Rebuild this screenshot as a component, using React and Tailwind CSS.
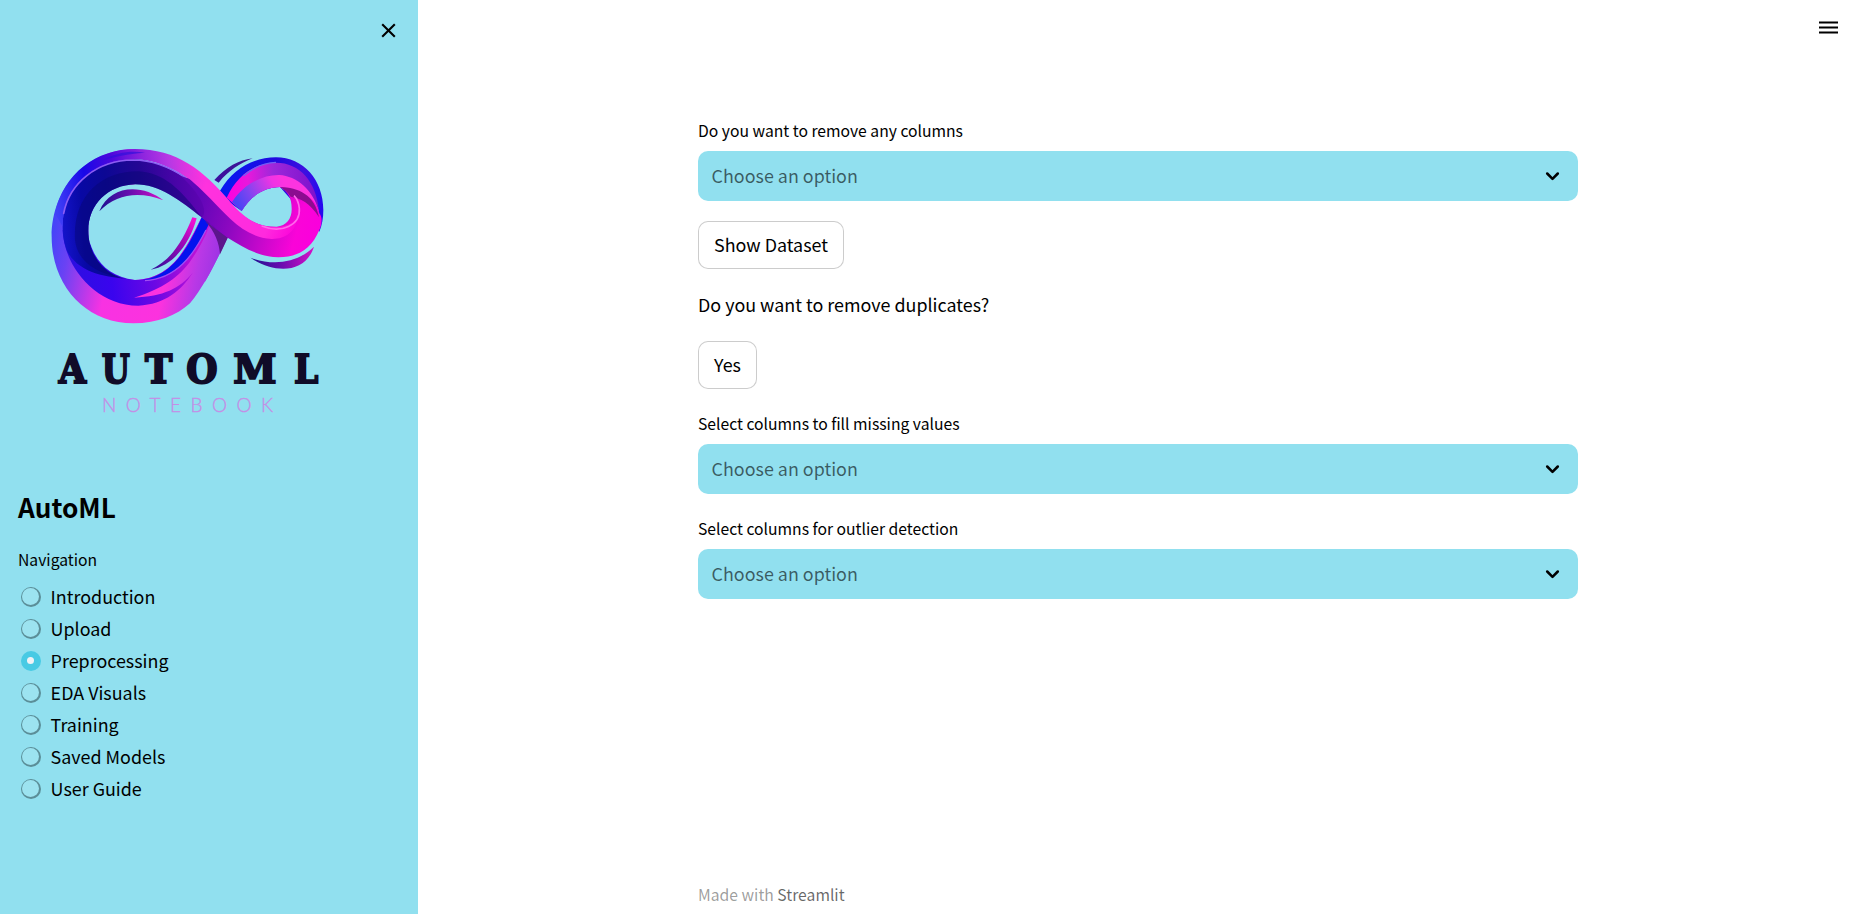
const NAV = ['Introduction', 'Upload', 'Preprocessing', 'EDA Visuals', 'Training', 'Saved Models', 'User Guide'];

function Logo() {
  return (
    <svg viewBox="0 0 930 900" className="block h-[300px] w-[310px]" role="img" aria-label="AutoML Notebook">
      <defs>
        <linearGradient id="outer" gradientUnits="userSpaceOnUse" x1="65" y1="300" x2="560" y2="400">
          <stop offset="0" stopColor="#4444f8" />
          <stop offset="0.12" stopColor="#6a42f4" />
          <stop offset="0.38" stopColor="#f832e2" />
          <stop offset="0.72" stopColor="#fc32de" />
          <stop offset="0.9" stopColor="#b838e6" />
          <stop offset="1" stopColor="#a034e4" />
        </linearGradient>
        <linearGradient id="inner" gradientUnits="userSpaceOnUse" x1="95" y1="300" x2="570" y2="260">
          <stop offset="0" stopColor="#1414cc" />
          <stop offset="0.14" stopColor="#0808a4" />
          <stop offset="0.3" stopColor="#0c0894" />
          <stop offset="0.52" stopColor="#240694" />
          <stop offset="0.75" stopColor="#4a04a8" />
          <stop offset="1" stopColor="#6c04b8" />
        </linearGradient>
        <linearGradient id="topRim" gradientUnits="userSpaceOnUse" x1="80" y1="230" x2="520" y2="150">
          <stop offset="0" stopColor="#4040f6" />
          <stop offset="0.22" stopColor="#1808e8" />
          <stop offset="0.42" stopColor="#4c08dc" />
          <stop offset="0.62" stopColor="#8c24de" />
          <stop offset="0.8" stopColor="#b838e4" />
          <stop offset="1" stopColor="#fc32de" />
        </linearGradient>
        <linearGradient id="front" gradientUnits="userSpaceOnUse" x1="500" y1="230" x2="850" y2="330">
          <stop offset="0" stopColor="#6006b8" />
          <stop offset="0.3" stopColor="#8c08c0" />
          <stop offset="0.6" stopColor="#c808cc" />
          <stop offset="0.85" stopColor="#fa04d8" />
          <stop offset="1" stopColor="#fa00dc" />
        </linearGradient>
        <linearGradient id="stripe" gradientUnits="userSpaceOnUse" x1="440" y1="120" x2="805" y2="280">
          <stop offset="0" stopColor="#d034e0" />
          <stop offset="0.25" stopColor="#ff32de" />
          <stop offset="0.8" stopColor="#ff2ade" />
          <stop offset="1" stopColor="#fc04da" />
        </linearGradient>
        <linearGradient id="swath" gradientUnits="userSpaceOnUse" x1="112" y1="430" x2="540" y2="380">
          <stop offset="0" stopColor="#2a10e0" />
          <stop offset="0.3" stopColor="#3a04ee" />
          <stop offset="0.6" stopColor="#6c08e4" />
          <stop offset="0.85" stopColor="#b010d8" />
          <stop offset="1" stopColor="#c814d4" />
        </linearGradient>
        <linearGradient id="rightBack" gradientUnits="userSpaceOnUse" x1="590" y1="200" x2="880" y2="200">
          <stop offset="0" stopColor="#0818f0" />
          <stop offset="0.5" stopColor="#2008e0" />
          <stop offset="0.8" stopColor="#3c10e0" />
          <stop offset="1" stopColor="#2408f0" />
        </linearGradient>
        <linearGradient id="rightMid" gradientUnits="userSpaceOnUse" x1="595" y1="190" x2="865" y2="190">
          <stop offset="0" stopColor="#ff00e0" />
          <stop offset="0.22" stopColor="#e818dc" />
          <stop offset="0.5" stopColor="#9c28da" />
          <stop offset="1" stopColor="#7c10cc" />
        </linearGradient>
        <linearGradient id="rightInner" gradientUnits="userSpaceOnUse" x1="625" y1="225" x2="760" y2="150">
          <stop offset="0" stopColor="#4c44f4" />
          <stop offset="0.3" stopColor="#8044f0" />
          <stop offset="0.8" stopColor="#f034e4" />
          <stop offset="1" stopColor="#fc34e0" />
        </linearGradient>
        <linearGradient id="accent" x1="0" y1="0" x2="1" y2="0">
          <stop offset="0" stopColor="#1c1090" />
          <stop offset="0.5" stopColor="#6c0cb0" />
          <stop offset="1" stopColor="#d810c8" />
        </linearGradient>
        <linearGradient id="accentUp" x1="0" y1="1" x2="1" y2="0">
          <stop offset="0" stopColor="#281098" />
          <stop offset="0.6" stopColor="#9c08b8" />
          <stop offset="1" stopColor="#ff10d8" />
        </linearGradient>
        <linearGradient id="accentDark" x1="0" y1="0" x2="1" y2="0">
          <stop offset="0" stopColor="#3c10a0" />
          <stop offset="1" stopColor="#3c1490" />
        </linearGradient>
      </defs>

      {/* rear ribbon of the small loop */}
      <path fill="url(#rightBack)" d="M570 182 C610 115 670 82 738 82 C820 82 880 150 880 240 C880 265 876 285 868 305 L750 171 C700 172 660 200 635 243 L595 215 Z" />
      <path fill="url(#rightMid)" d="M590 203 C625 130 680 98 738 98 C810 98 858 155 867 240 L750 171 C700 172 660 200 635 243 Z" />
      <path fill="url(#rightInner)" d="M606 216 C642 160 700 134 748 135 C800 138 850 180 867 245 L750 171 C700 172 660 200 635 243 Z" />
      <path fill="none" stroke="#7060f4" strokeWidth="4" d="M640 138 C670 112 700 98 738 97" />

      {/* body of the large loop */}
      <path fill="url(#outer)" d="M315 57 C175 57 65 170 65 320 C65 470 170 580 310 580 C385 580 440 556 480 520 C525 465 558 395 593 322 L515 262 C470 350 430 446 315 450 C235 448 175 385 175 302 C175 222 235 163 315 163 Z" />
      <path fill="url(#swath)" d="M98 300 C100 400 190 527 325 527 C405 524 455 480 487 430 C520 390 550 335 548 285 L515 262 C470 350 430 446 315 450 C240 440 200 400 180 340 Z" />
      <path fill="url(#outer)" d="M312 503 C400 475 448 440 482 392 C512 350 530 310 540 282 L593 322 C572 365 550 412 525 455 L487 430 C450 475 400 500 312 503 Z" />
      <path fill="#0412ee" d="M515 262 C480 345 430 435 340 450 C430 455 495 375 538 280 Z" />
      <path fill="none" stroke="#a04cf4" strokeWidth="4" d="M345 452 C440 447 490 375 528 300" />
      <path fill="#5c168c" d="M525 272 C555 305 568 340 570 373 L594 322 Z" />

      {/* dark inner face and upper rim */}
      <path fill="url(#inner)" d="M98 290 C98 170 190 88 315 88 C410 92 500 165 600 240 L593 323 C565 304 540 285 515 262 C450 212 390 163 315 163 C235 166 175 222 175 302 C175 385 235 448 315 450 C220 440 150 430 112 365 C103 340 98 320 98 290 Z" />
      <path fill="#060672" opacity="0.45" d="M135 330 C128 195 215 124 325 124 C400 128 450 175 515 262 C450 212 390 163 315 163 C235 166 175 222 175 302 C175 370 215 425 265 442 C190 425 142 390 135 330 Z" />
      <path fill="url(#topRim)" d="M75 250 C100 130 200 57 315 57 C440 57 520 120 600 215 L540 205 C480 140 400 90 315 88 C190 88 98 170 98 290 Z" />
      <path fill="#3010dc" opacity="0.7" d="M215 92 C265 66 300 62 345 68 C290 72 255 80 215 92 Z" />
      <path fill="none" stroke="#8c5cf4" strokeWidth="5" strokeLinecap="round" d="M101 250 C118 160 200 91 310 90 C370 91 420 112 465 142" />

      {/* front ribbon crossing into the small loop */}
      <path fill="url(#front)" d="M452 138 C520 155 560 190 610 230 C650 272 690 291 740 290 C770 287 786 265 785 235 C785 205 775 185 750 171 C815 178 860 205 868 250 C878 262 876 282 868 300 C845 355 805 382 745 382 C680 380 640 350 593 323 C560 300 530 270 515 262 C540 240 500 180 452 138 Z" />
      <path fill="url(#stripe)" d="M440 118 C500 135 555 165 600 215 C645 265 680 292 745 291 C775 289 795 275 803 262 C798 305 765 328 725 327 C640 322 590 255 540 205 C510 175 480 145 440 118 Z" />
      <path fill="#8c0c90" d="M750 171 C805 172 855 195 867 262 C840 218 810 204 782 200 C774 188 764 178 750 171 Z" />
      <path fill="none" stroke="#ff68ec" strokeWidth="5" d="M695 288 C755 312 812 285 808 235 C806 217 800 205 792 197" />

      {/* floating accent strokes */}
      <path fill="url(#accent)" d="M208 244 C240 165 335 160 400 211 C330 183 260 190 208 244 Z" />
      <path fill="url(#accentUp)" d="M487 262 L500 265 C480 340 430 408 362 419 C425 390 460 330 487 262 Z" />
      <path fill="url(#accentDark)" d="M553 150 C590 110 625 91 668 85 C630 100 595 122 566 158 Z" />
      <path fill="url(#accent)" d="M661 383 C730 408 800 400 852 350 C825 434 730 430 661 383 Z" />

      <g fill="#100c28" stroke="#100c28" strokeWidth="6" fontFamily="'DejaVu Serif', serif" fontWeight="700" fontSize="118">
        <text x="86" y="759" textLength="82" lengthAdjust="spacingAndGlyphs">A</text>
        <text x="215" y="759" textLength="84" lengthAdjust="spacingAndGlyphs">U</text>
        <text x="345" y="759" textLength="82" lengthAdjust="spacingAndGlyphs">T</text>
        <text x="469" y="759" textLength="94" lengthAdjust="spacingAndGlyphs">O</text>
        <text x="610" y="759" textLength="130" lengthAdjust="spacingAndGlyphs">M</text>
        <text x="792" y="759" textLength="73" lengthAdjust="spacingAndGlyphs">L</text>
      </g>
      <text x="216" y="845" textLength="513" fill="#c48ee6" stroke="#c48ee6" fontFamily="Lato, sans-serif" fontWeight="300" fontSize="57">NOTEBOOK</text>
    </svg>
  );
}

function Radio({ label, checked }) {
  return (
    <label className="flex h-8 items-center">
      <span className={checked
        ? 'flex size-5 items-center justify-center rounded-full bg-[#48cae4] pr-px pb-px'
        : 'flex size-5 items-center justify-center rounded-full bg-[#5b8e98]'}>
        <span className={checked
          ? 'size-[7px] rounded-full bg-[#f0f2f6]'
          : 'mr-px mb-px size-[17px] rounded-full bg-[#9ce3f0]'} />
      </span>
      <span className="mb-0.5 ml-[9.6px] text-[17.9px] leading-8">{label}</span>
    </label>
  );
}

function Select({ label }) {
  return (
    <div>
      <div className="mb-2 h-[25px] text-[15.7px] leading-[25px]">{label}</div>
      <div className="flex h-[50px] items-center justify-between rounded-[10px] bg-[#91e0ef] pr-[17.5px] pl-[13.6px]">
        <span className="mb-0.5 text-[17.9px] leading-8 text-black/60">Choose an option</span>
        <svg viewBox="0 0 8 8" className="mt-px size-[17px]">
          <path d="M1.5 2.6 L4 5.1 L6.5 2.6" fill="none" stroke="#000" strokeWidth="1.2" strokeLinecap="round" strokeLinejoin="round" />
        </svg>
      </div>
    </div>
  );
}

function Button({ children, className }) {
  return (
    <button className={`flex h-12 shrink-0 items-center justify-center rounded-[10px] border border-black/20 bg-white pb-0.5 text-[17.9px] ${className}`}>
      {children}
    </button>
  );
}

export default function App() {
  return (
    <div className="flex h-[914px] w-[1858px] overflow-hidden bg-white font-['Noto_Sans_CJK_SC',sans-serif] text-black">
      <aside className="flex w-[418px] shrink-0 flex-col bg-[#91e0ef]">
        <div className="flex h-[130px] justify-end pt-[20px] pr-[19px]">
          <svg viewBox="0 0 20 20" className="size-[21px]">
            <path d="M4 4 L16 16 M16 4 L4 16" stroke="#000" strokeWidth="2" fill="none" />
          </svg>
        </div>
        <div className="pl-[30px]"><Logo /></div>
        <h1 className="mt-[57px] ml-[18px] h-10 text-[26.2px] leading-10 font-semibold">AutoML</h1>
        <div className="mt-[21px] ml-[18px] h-6 text-[15.7px] leading-6">Navigation</div>
        <nav className="mt-[9px] ml-[21px]">
          {NAV.map((label) => <Radio key={label} label={label} checked={label === 'Preprocessing'} />)}
        </nav>
      </aside>
      <div className="flex flex-1 flex-col">
        <header className="flex h-[118px] justify-end pt-[20px] pr-[20px]">
          <svg viewBox="0 0 19 15" className="h-[15px] w-[19px]">
            <path d="M0 2.5 H19 M0 7.5 H19 M0 12.5 H19" stroke="#000" strokeWidth="2.2" />
          </svg>
        </header>
        <main className="ml-[280px] flex h-[796px] w-[880px] flex-col">
          <Select label="Do you want to remove any columns" />
          <Button className="mt-5 w-[146px]">Show Dataset</Button>
          <p className="mt-[19px] mb-[21px] h-8 text-[17.9px] leading-8">Do you want to remove duplicates?</p>
          <Button className="w-[59px]">Yes</Button>
          <div className="mt-[22px]"><Select label="Select columns to fill missing values" /></div>
          <div className="mt-[22px]"><Select label="Select columns for outlier detection" /></div>
          <footer className="mt-auto mb-[7px] text-[15.7px] leading-6 text-black/40">
            Made with <span className="text-black/60">Streamlit</span>
          </footer>
        </main>
      </div>
    </div>
  );
}
